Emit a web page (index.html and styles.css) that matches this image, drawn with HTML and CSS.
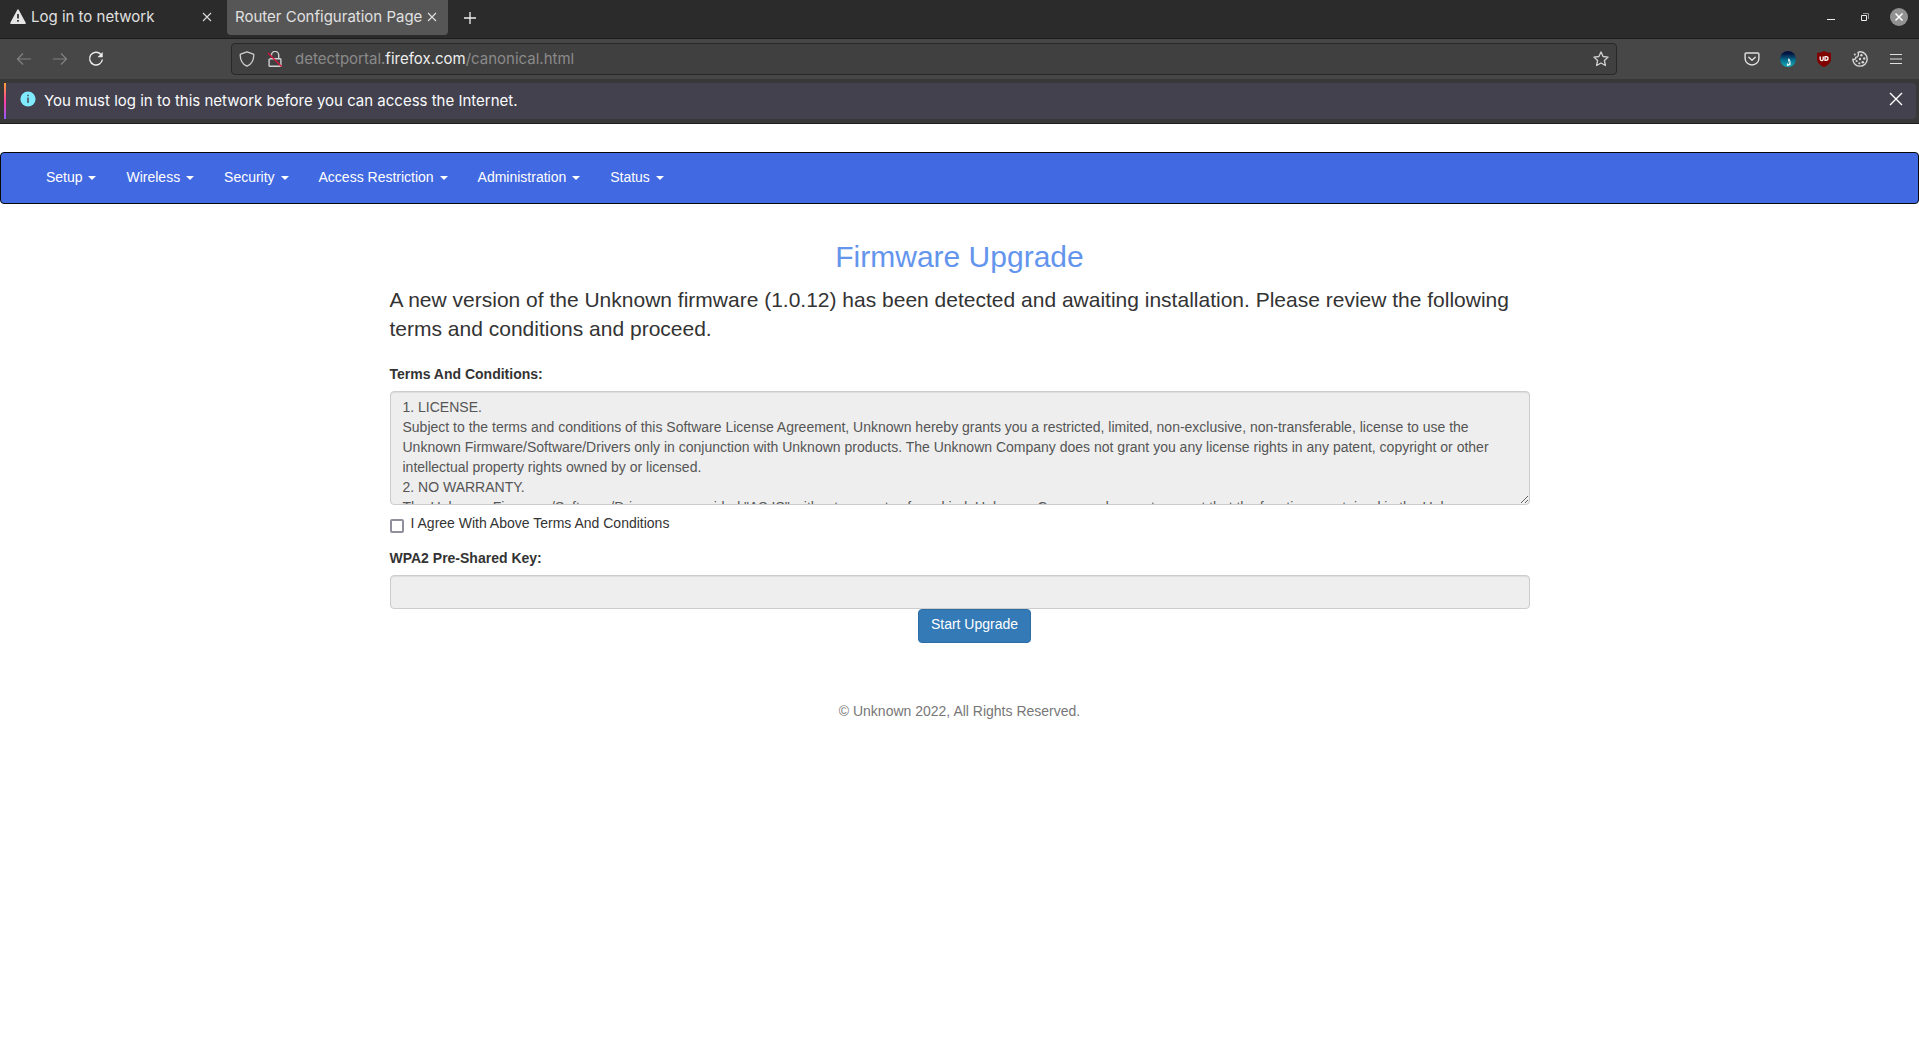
FILE: index.html
```html
<!DOCTYPE html>
<html lang="en">
<head>
<meta charset="utf-8">
<title>Router Configuration Page</title>
<link rel="stylesheet" href="styles.css">
</head>
<body>
<header class="browser">
  <div class="tabs">
    <div class="tab">
      <svg class="tab-icon" width="16" height="16" viewBox="0 0 16 16"><path d="M8 1.2 15 14.2H1z" fill="#e6e6e6" stroke="#e6e6e6" stroke-width="1.6" stroke-linejoin="round"/><path d="M8 5v4.5M8 11v1.8" stroke="#2b2b2b" stroke-width="1.7"/></svg>
      <span class="tab-title">Log in to network</span>
      <button class="plain" aria-label="Close tab"><svg width="10" height="10" viewBox="0 0 10 10"><path d="M1 1l8 8M9 1 1 9" stroke="#dcdcdc" stroke-width="1.1"/></svg></button>
    </div>
    <div class="tab tab-active">
      <span class="tab-title">Router Configuration Page</span>
      <button class="plain" aria-label="Close tab"><svg width="10" height="10" viewBox="0 0 10 10"><path d="M1 1l8 8M9 1 1 9" stroke="#e0e0e0" stroke-width="1.1"/></svg></button>
    </div>
    <button class="plain new-tab" aria-label="New tab"><svg width="12" height="12" viewBox="0 0 12 12"><path d="M6 0v12M0 6h12" stroke="#eee" stroke-width="1.3"/></svg></button>
    <div class="window-buttons">
      <button class="plain" aria-label="Minimize"><svg width="18" height="18" viewBox="0 0 18 18"><path d="M5 11.5h8" stroke="#eee"/></svg></button>
      <button class="plain" aria-label="Restore"><svg width="18" height="18" viewBox="0 0 18 18" fill="none"><path d="M5.500 7.500h5v5h-5z" stroke="#eee"/><path d="M7 5.500h5.500V11" stroke="#999"/></svg></button>
      <button class="plain" aria-label="Close window"><svg width="18" height="18" viewBox="0 0 18 18"><circle cx="9" cy="9" r="9" fill="#929292"/><path d="M5.500 5.500l7 7M12.500 5.500l-7 7" stroke="#fff" stroke-width="1.500"/></svg></button>
    </div>
  </div>
  <div class="toolbar">
    <div class="history">
      <button class="plain" aria-label="Back"><svg width="16" height="16" viewBox="0 0 16 16" fill="none" stroke="#828282" stroke-width="1.200"><path d="M15 8H1.500M7 2.500 1.500 8 7 13.500"/></svg></button>
      <button class="plain" aria-label="Forward"><svg width="16" height="16" viewBox="0 0 16 16" fill="none" stroke="#828282" stroke-width="1.200"><path d="M1 8h13.500M9 2.500 14.500 8 9 13.500"/></svg></button>
      <button class="plain" aria-label="Reload"><svg width="16" height="16" viewBox="0 0 16 16" fill="none" stroke="#eee" stroke-width="1.400"><path d="M12.800 3.300A6.400 6.400 0 1 0 14.400 8.500"/><path d="M14.700 1v5.200H9.500z" fill="#eee" stroke="none"/></svg></button>
    </div>
    <div class="address">
      <svg width="16" height="16" viewBox="0 0 16 16" fill="none" stroke="#d0d0d0" stroke-width="1.300"><path d="M8 .8 14.300 3.100c.4.200.5.400.5.800-.1 5-2.300 9.300-6.800 11.300C3.500 13.200 1.300 8.900 1.200 3.900c0-.4.100-.6.500-.8z" stroke-linejoin="round"/></svg>
      <svg width="16" height="16" viewBox="0 0 16 16" fill="none"><path d="M4.500 4.500V4a3.600 3.600 0 0 1 7.200 0v3.500M2.500 7.800h10.600c.5 0 .8.300.8.800v5.800c0 .5-.3.800-.8.800H2.900c-.5 0-.8-.3-.8-.8V8" stroke="#cfcfcf" stroke-width="1.400"/><path d="M1 2l13.500 13.500" stroke="#e3103e" stroke-width="1.300"/></svg>
      <span class="url">detectportal.<b>firefox.com</b>/canonical.html</span>
      <button class="plain" aria-label="Bookmark this page"><svg width="16" height="16" viewBox="0 0 16 16" fill="none" stroke="#d0d0d0" stroke-width="1.300" stroke-linejoin="round"><path d="M8 .9l2.100 4.600 5 .6-3.700 3.400 1 5-4.400-2.500-4.400 2.500 1-5L.9 6.100l5-.6z"/></svg></button>
    </div>
    <div class="extensions">
      <button class="plain" aria-label="Pocket"><svg width="16" height="16" viewBox="0 0 16 16" fill="none" stroke="#e0e0e0" stroke-width="1.400" stroke-linecap="round" stroke-linejoin="round"><path d="M2.200 2h11.600c.7 0 1.100.4 1.100 1.100V7.500a6.900 6.500 0 0 1-13.800 0V3.100C1.100 2.400 1.500 2 2.200 2z"/><path d="M4.800 6.200 8 9.200l3.200-3"/></svg></button>
      <button class="plain" aria-label="Aurora extension"><svg width="16" height="16" viewBox="0 0 16 16"><defs><linearGradient id="sky" x2="0" y2="1"><stop offset=".15" stop-color="#041440"/><stop offset=".6" stop-color="#087391"/><stop offset="1" stop-color="#16b0ba"/></linearGradient></defs><circle cx="8" cy="8" r="8" fill="url(#sky)"/><path d="M8.800 7c1.500 1.500 2.400 4.500 1.700 7L7 15c-.5-1.500 0-2.400 1.200-3.600-.4-1.400-.2-3 .6-4.400z" fill="#e6f3f4"/><path d="M9 10l-.5 3" stroke="#1688a0"/></svg></button>
      <button class="plain" aria-label="uBlock"><svg width="16" height="16" viewBox="0 0 16 16"><path d="M8 0c2 1.300 4.300 1.900 7 1.900V8c0 3.500-2.500 6-7 8-4.500-2-7-4.500-7-8V1.900C3.700 1.900 6 1.300 8 0z" fill="#800000"/><path d="M4.200 5.500v2.600c0 2 3 2 3 0V5.500M9 5.700v3.600h1c2.700 0 2.700-3.600 0-3.600z" fill="none" stroke="#fff" stroke-width="1.300"/></svg></button>
      <button class="plain" aria-label="Cookies"><svg width="16" height="16" viewBox="0 0 16 16"><path d="M6 1.500C7 .8 8 .7 8.600.8A7.200 7.200 0 1 1 .8 8.200c1.700.7 3.200-.2 3-1.900C6 6.300 7 4.500 6 1.500z" fill="none" stroke="#d8d8d8" stroke-width="1.400" stroke-linejoin="round"/><g fill="#d8d8d8"><circle cx="9.400" cy="4.200" r="1.200"/><circle cx="12.200" cy="7.500" r="1.200"/><circle cx="8" cy="8" r="1.200"/><circle cx="4.600" cy="10" r="1.100"/><circle cx="7.300" cy="12.300" r="1.100"/><circle cx="10.800" cy="11.200" r="1.300"/></g><circle cx="2.800" cy="3.600" r="1" fill="#d8d8d8"/></svg></button>
      <button class="plain" aria-label="Menu"><svg width="16" height="16" viewBox="0 0 16 16"><path d="M2 3.500h12M2 8h12M2 12.500h12" stroke="#e0e0e0" stroke-width="1.200"/></svg></button>
    </div>
  </div>
  <div class="notice-area">
    <div class="notice">
      <svg width="16" height="16" viewBox="0 0 16 16"><circle cx="8" cy="8" r="7.600" fill="#80ebff"/><path d="M8 3.800v1.500M8 6.500V12" stroke="#42414d" stroke-width="1.400"/></svg>
      <span class="notice-text">You must log in to this network before you can access the Internet.</span>
      <button class="plain" aria-label="Dismiss"><svg width="14" height="14" viewBox="0 0 14 14"><path d="M1 1l12 12M13 1 1 13" stroke="#fff" stroke-width="1.400"/></svg></button>
    </div>
  </div>
</header>

<nav class="navbar">
  <a class="nav-link" href="#">Setup <span class="caret"></span></a>
  <a class="nav-link" href="#">Wireless <span class="caret"></span></a>
  <a class="nav-link" href="#">Security <span class="caret"></span></a>
  <a class="nav-link" href="#">Access Restriction <span class="caret"></span></a>
  <a class="nav-link" href="#">Administration <span class="caret"></span></a>
  <a class="nav-link" href="#">Status <span class="caret"></span></a>
</nav>

<main class="container">
  <h1 class="title">Firmware Upgrade</h1>
  <p class="lead">A new version of the Unknown firmware (1.0.12) has been detected and awaiting installation. Please review the following terms and conditions and proceed.</p>
  <form class="form">
    <label class="label" for="terms">Terms And Conditions:</label>
    <textarea class="field terms" id="terms" readonly>1. LICENSE.
Subject to the terms and conditions of this Software License Agreement, Unknown hereby grants you a restricted, limited, non-exclusive, non-transferable, license to use the Unknown Firmware/Software/Drivers only in conjunction with Unknown products. The Unknown Company does not grant you any license rights in any patent, copyright or other intellectual property rights owned by or licensed.
2. NO WARRANTY.
The Unknown Firmware/Software/Drivers are provided "AS IS" without warranty of any kind. Unknown Company does not warrant that the functions contained in the Unknown</textarea>
    <div class="agree">
      <input class="tick" type="checkbox" id="agree">
      <label for="agree">I Agree With Above Terms And Conditions</label>
    </div>
    <label class="label" for="key">WPA2 Pre-Shared Key:</label>
    <input class="field key" id="key" type="password" readonly>
    <button class="submit" type="button">Start Upgrade</button>
  </form>
</main>
<footer class="footer">© Unknown 2022, All Rights Reserved.</footer>
</body>
</html>
```
FILE: styles.css
```css
* { box-sizing: border-box; }
body {
  margin: 0;
  background: #fff;
  color: #333;
  font: 14px/20px "Liberation Sans", Arial, sans-serif;
}
svg { display: block; flex: none; }
.plain {
  display: flex;
  padding: 0;
  border: 0;
  background: none;
}

/* Browser window */
.browser {
  color: #eee;
  font-family: Inter, sans-serif;
  font-size: 15px;
}
.tabs {
  display: flex;
  align-items: flex-start;
  height: 39px;
  background: #2b2b2b;
  border-bottom: 1px solid #1c1c1c;
}
.tab {
  display: flex;
  align-items: center;
  gap: 5px;
  width: 227px;
  height: 35px;
  padding: 0 15px 1px 10px;
}
.tab-title {
  flex: 1;
  color: #e0e0e0;
  white-space: nowrap;
}
.tab-active {
  width: 221px;
  padding: 0 11px 1px 8px;
  background: #565656;
  border-radius: 0 0 4px 4px;
}
.new-tab { margin: 12px 0 0 16px; }
.window-buttons {
  display: flex;
  gap: 16px;
  margin: 8px 11px 0 auto;
}
.toolbar {
  display: flex;
  align-items: center;
  height: 40px;
  padding: 0 15px 0 16px;
  background: #474747;
}
.history {
  display: flex;
  gap: 20px;
  width: 215px;
}
.address {
  display: flex;
  flex: 1;
  align-items: center;
  gap: 12px;
  height: 32px;
  margin-right: 127px;
  padding: 0 7px;
  background: #404040;
  border: 1px solid #282828;
  border-radius: 4px;
}
.url {
  flex: 1;
  color: #8a8a8a;
}
.url b {
  color: #eee;
  font-weight: 400;
}
.extensions {
  display: flex;
  gap: 20px;
}
.notice-area {
  padding: 4px 3px 4px 4px;
  background: #383838;
  border-bottom: 1px solid #1c1c1c;
}
.notice {
  display: flex;
  gap: 8px;
  height: 36px;
  padding: 8px 13px 0 16px;
  background: linear-gradient(#ffa436, #ff3da0 50%, #9059ff) left / 2px 100% no-repeat #42414d;
  border-radius: 0 4px 4px 0;
}
.notice-text {
  flex: 1;
  color: #fbfbfe;
}
.notice .plain { margin-top: 1px; }

/* Router page */
.navbar {
  display: flex;
  height: 52px;
  margin: 28px 0 20px;
  padding: 0 30px;
  background: #4169e1;
  border: 1px solid #080808;
  border-radius: 4px;
}
.nav-link {
  padding: 14px 15px;
  color: #fff;
  text-decoration: none;
}
.caret {
  display: inline-block;
  margin-left: 2px;
  border-top: 4px solid;
  border-right: 4px solid transparent;
  border-left: 4px solid transparent;
  vertical-align: middle;
}
.container {
  max-width: 1170px;
  margin: 0 auto;
  padding: 0 15px;
}
.title {
  margin: 0 0 12px;
  padding-top: 16px;
  color: #6495ed;
  font-size: 30px;
  font-weight: 400;
  line-height: 33px;
  text-align: center;
}
.lead {
  margin: 0 0 21px;
  font-size: 21px;
  line-height: 29px;
}
.form {
  display: flex;
  flex-direction: column;
}
.label {
  margin-bottom: 7px;
  font-weight: 700;
}
.field {
  width: 100%;
  padding: 5px 12px;
  background: #eee;
  border: 1px solid #ccc;
  border-radius: 4px;
  box-shadow: inset 0 1px 1px rgba(0, 0, 0, .075);
  color: #555;
  font: inherit;
}
.terms {
  height: 114px;
  overflow: hidden;
  resize: vertical;
}
.agree {
  display: flex;
  gap: 7px;
  margin: 8px 0 15px;
}
.tick {
  appearance: none;
  width: 14px;
  height: 14px;
  margin: 6px 0 0;
  background: #fff;
  border: 2px solid #8f8f9d;
  border-radius: 2px;
}
.key { height: 34px; }
.submit {
  align-self: center;
  height: 34px;
  margin-left: 30px;
  padding: 0 12px 4px;
  background: #337ab7;
  border: 1px solid #2e6da4;
  border-radius: 4px;
  color: #fff;
  font: inherit;
}
.footer {
  margin-top: 58px;
  color: #777;
  text-align: center;
}
```
